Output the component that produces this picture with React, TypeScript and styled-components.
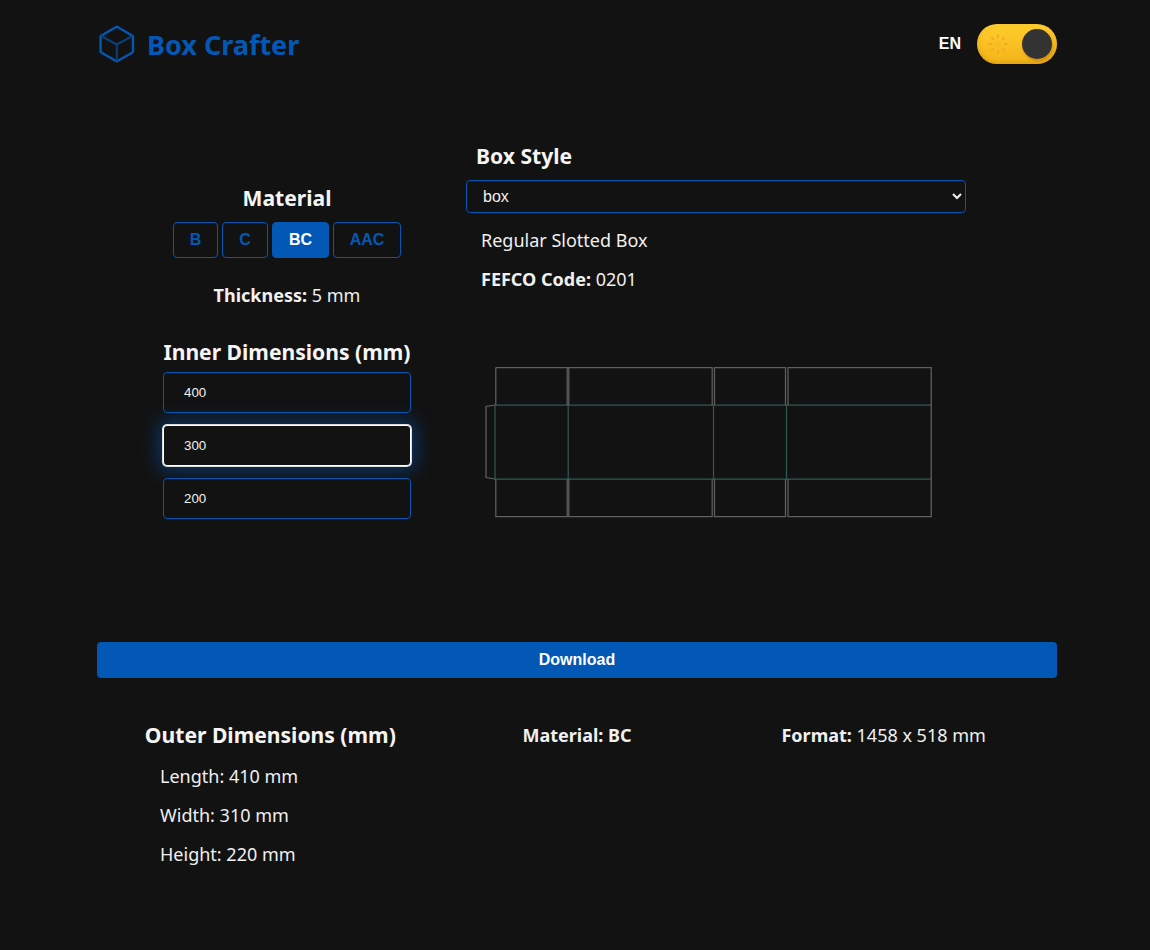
import React from 'react';
import styled, { createGlobalStyle } from 'styled-components';

const GlobalStyle = createGlobalStyle`
  html, body {
    margin: 0;
    padding: 0;
    background: #121212;
    color-scheme: dark;
  }
  body {
    min-height: 950px;
    color: #f0f0f0;
    font-family: "Noto Sans", sans-serif;
    font-size: 18px;
  }
`;

const Page = styled.div`
  width: 960px;
  margin-left: 97px;
`;

const Header = styled.header`
  display: flex;
  align-items: center;
  justify-content: space-between;
  height: 88px;
`;

const Brand = styled.div`
  display: flex;
  align-items: center;
  gap: 11px;
  padding-left: 1px;
`;

const BrandName = styled.h1`
  margin: 0;
  font-size: 27px;
  font-weight: 700;
  color: #0458b5;
`;

const HeaderControls = styled.div`
  display: flex;
  align-items: center;
  gap: 16px;
`;

const Lang = styled.span`
  font-family: "Liberation Sans", sans-serif;
  font-size: 16px;
  font-weight: 700;
  color: #fff;
`;

const Toggle = styled.div`
  position: relative;
  display: flex;
  align-items: center;
  width: 80px;
  height: 40px;
  padding-left: 10px;
  box-sizing: border-box;
  border-radius: 20px;
  background: linear-gradient(180deg, #ffcc2e, #f4b41a);
  box-shadow: inset 0 -2px 4px rgba(190, 120, 0, 0.35);
`;

const Thumb = styled.span`
  position: absolute;
  top: 5px;
  right: 5px;
  width: 30px;
  height: 30px;
  border-radius: 50%;
  background: #333;
  box-shadow: 1px 2px 3px rgba(170, 100, 0, 0.5);
`;

const Main = styled.main`
  display: flex;
  align-items: flex-start;
  gap: 55px;
  padding: 55px 0 0 66px;
  height: 554px;
  box-sizing: border-box;
`;

const LeftColumn = styled.section`
  display: flex;
  flex-direction: column;
  align-items: center;
  width: 248px;
  padding-top: 42px;
`;

const RightColumn = styled.section`
  display: flex;
  flex-direction: column;
  width: 500px;
`;

const Heading = styled.h2`
  margin: 0;
  padding-bottom: 2px;
  font-size: 21.1px;
  line-height: 25px;
  font-weight: 700;
  color: #f5f5f5;
`;

const StyleHeading = styled(Heading)`
  margin: 0 0 10px 10px;
`;

const Tabs = styled.div`
  display: flex;
  gap: 4px;
  margin-top: 10px;
`;

const Tab = styled.button<{ $active?: boolean; $w: number }>`
  width: ${p => p.$w}px;
  height: 36px;
  padding: 0;
  border: 1px solid #0458b5;
  border-radius: 4px;
  font-family: "Liberation Sans", sans-serif;
  font-size: 16px;
  font-weight: 700;
  color: ${p => (p.$active ? '#fff' : '#0458b5')};
  background: ${p => (p.$active ? '#0458b5' : 'transparent')};
`;

const Thickness = styled.p`
  margin: 24px 0 0;
  line-height: 27px;
  text-align: center;
`;

const InnerHeading = styled(Heading)`
  margin: 30px 0 6px;
  white-space: nowrap;
`;

const Inputs = styled.div`
  display: flex;
  flex-direction: column;
  gap: 12px;
  width: 100%;
`;

const DimInput = styled.input<{ $focus?: boolean }>`
  width: 100%;
  height: 41px;
  box-sizing: border-box;
  padding: 0 20px;
  border: 1px solid ${p => (p.$focus ? '#fff' : '#0458b5')};
  border-radius: 4px;
  outline: none;
  background: #121212;
  color: #f0f0f0;
  font-family: "Liberation Sans", sans-serif;
  font-size: 13.33px;
  box-shadow: ${p => (p.$focus ? '0 0 0 1px #ddd, 0 0 18px 5px rgba(4, 88, 181, 0.5)' : 'none')};
`;

const StyleSelect = styled.select`
  width: 500px;
  height: 33px;
  box-sizing: border-box;
  padding: 0 12px;
  border: 1px solid #0458b5;
  border-radius: 4px;
  background: #121212;
  color: #f0f0f0;
  font-family: "Liberation Sans", sans-serif;
  font-size: 16px;
`;

const Description = styled.p`
  margin: 0 0 0 15px;
  line-height: 39px;
`;

const FirstDescription = styled(Description)`
  margin-top: 8px;
`;

const Dieline = styled.svg`
  display: block;
  margin: 67px 0 0 18.5px;
`;

const DownloadButton = styled.button`
  display: block;
  width: 100%;
  height: 36px;
  border: 0;
  border-radius: 4px;
  background: #0458b5;
  color: #fff;
  font-family: "Liberation Sans", sans-serif;
  font-size: 16px;
  font-weight: 700;
`;

const Summary = styled.section`
  display: grid;
  grid-template-columns: repeat(3, 1fr);
  padding: 44px 20px 0;
  text-align: center;
`;

const SummaryItem = styled.div`
  display: flex;
  flex-direction: column;
  align-items: center;
  line-height: 27px;
`;

const SizeList = styled.div`
  align-self: stretch;
  padding: 8px 0 0 43px;
  text-align: left;
  line-height: 39px;
`;

const CubeIcon = () => (
  <svg width="38" height="38" viewBox="0 0 38 38" fill="none">
    <path
      d="M19.5 2 34 10.5a1.5 1.5 0 0 1 1 1.6v14a1.5 1.5 0 0 1-1 1.6L19.5 36a1.5 1.5 0 0 1-1.5 0L3.6 27.7a1.5 1.5 0 0 1-1-1.6v-14a1.5 1.5 0 0 1 1-1.6L18 2a1.5 1.5 0 0 1 1.5 0Z"
      stroke="#0458b5"
      strokeWidth="2.4"
      strokeLinejoin="round"
    />
    <path d="M3 11 18.8 19.5 34.6 11M18.8 19.5V36" stroke="#0a3f7a" strokeWidth="2" />
  </svg>
);

const SunIcon = () => (
  <svg width="22" height="22" viewBox="0 0 22 22" stroke="#f5a623" strokeWidth="1.8" strokeLinecap="round" opacity="0.85">
    <path d="M11 2v2.5M11 17.5V20M2 11h2.5M17.5 11H20M4.6 4.6l1.8 1.8M15.6 15.6l1.8 1.8M4.6 17.4l1.8-1.8M15.6 6.4l1.8-1.8" />
    <circle cx="11" cy="11" r="3" fill="#f9bb22" stroke="none" />
  </svg>
);

const cuts =
  'M10.8 1.5H82.2V39M10.8 1.5V39M83.8 39V1.5H227.2V39M229.5 39V1.5H300.5V39M303 39V1.5H446.2V113M10.8 113V150.5H82.2V113M83.8 113V150.5H227.2V113M229.5 113V150.5H300.5V113M303 113V150.5H446.2V113M10 39 1 40.5V111.5L10 113';
const folds = 'M10 39H446.2M10 113H446.2M10 39V113M83.2 39V113M228.5 39V113M301.5 39V113';

const BoxDieline = () => (
  <Dieline width="448" height="152" viewBox="0 0 448 152" fill="none">
    <path d={folds} stroke="#2f5a54" strokeWidth="1.25" />
    <path d={cuts} stroke="#606060" strokeWidth="1.25" />
  </Dieline>
);

const materials = [
  { name: 'B', w: 45 },
  { name: 'C', w: 46 },
  { name: 'BC', w: 57, active: true },
  { name: 'AAC', w: 68 },
];

const App: React.FC = () => {
  return (
    <Page>
      <GlobalStyle />
      <Header>
        <Brand>
          <CubeIcon />
          <BrandName>Box Crafter</BrandName>
        </Brand>
        <HeaderControls>
          <Lang>EN</Lang>
          <Toggle>
            <SunIcon />
            <Thumb />
          </Toggle>
        </HeaderControls>
      </Header>
      <Main>
        <LeftColumn>
          <Heading>Material</Heading>
          <Tabs>
            {materials.map(m => (
              <Tab key={m.name} $w={m.w} $active={m.active}>
                {m.name}
              </Tab>
            ))}
          </Tabs>
          <Thickness>
            <b>Thickness:</b> 5 mm
          </Thickness>
          <InnerHeading>Inner Dimensions (mm)</InnerHeading>
          <Inputs>
            <DimInput defaultValue="400" />
            <DimInput defaultValue="300" $focus />
            <DimInput defaultValue="200" />
          </Inputs>
        </LeftColumn>
        <RightColumn>
          <StyleHeading>Box Style</StyleHeading>
          <StyleSelect defaultValue="box">
            <option value="box">box</option>
          </StyleSelect>
          <FirstDescription>Regular Slotted Box</FirstDescription>
          <Description>
            <b>FEFCO Code:</b> 0201
          </Description>
          <BoxDieline />
        </RightColumn>
      </Main>
      <DownloadButton>Download</DownloadButton>
      <Summary>
        <SummaryItem>
          <Heading>Outer Dimensions (mm)</Heading>
          <SizeList>
            <div>Length: 410 mm</div>
            <div>Width: 310 mm</div>
            <div>Height: 220 mm</div>
          </SizeList>
        </SummaryItem>
        <SummaryItem>
          <b>Material: BC</b>
        </SummaryItem>
        <SummaryItem>
          <span>
            <b>Format:</b> 1458 x 518 mm
          </span>
        </SummaryItem>
      </Summary>
    </Page>
  );
};

export default App;
